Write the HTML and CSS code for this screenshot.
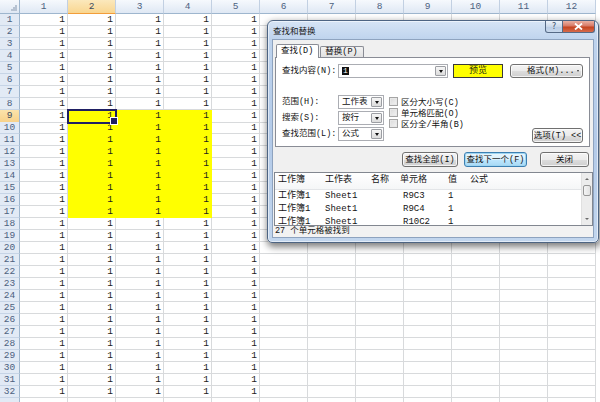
FILE: index.html
```html
<!DOCTYPE html>
<html lang="zh-CN">
<head>
<meta charset="utf-8">
<title>查找和替换</title>
<link rel="stylesheet" href="styles.css">
</head>
<body>
<div class="app">
  <div class="sheet">
    <div class="row head"><span class="corner"></span><span>1</span><span class="act">2</span><span>3</span><span>4</span><span>5</span><span>6</span><span>7</span><span>8</span><span>9</span><span>10</span><span>11</span><span>12</span></div>
    <div class="row"><span class="rh">1</span><span>1</span><span>1</span><span>1</span><span>1</span><span>1</span><span></span><span></span><span></span><span></span><span></span><span></span><span></span></div>
    <div class="row"><span class="rh">2</span><span>1</span><span>1</span><span>1</span><span>1</span><span>1</span><span></span><span></span><span></span><span></span><span></span><span></span><span></span></div>
    <div class="row"><span class="rh">3</span><span>1</span><span>1</span><span>1</span><span>1</span><span>1</span><span></span><span></span><span></span><span></span><span></span><span></span><span></span></div>
    <div class="row"><span class="rh">4</span><span>1</span><span>1</span><span>1</span><span>1</span><span>1</span><span></span><span></span><span></span><span></span><span></span><span></span><span></span></div>
    <div class="row"><span class="rh">5</span><span>1</span><span>1</span><span>1</span><span>1</span><span>1</span><span></span><span></span><span></span><span></span><span></span><span></span><span></span></div>
    <div class="row"><span class="rh">6</span><span>1</span><span>1</span><span>1</span><span>1</span><span>1</span><span></span><span></span><span></span><span></span><span></span><span></span><span></span></div>
    <div class="row"><span class="rh">7</span><span>1</span><span>1</span><span>1</span><span>1</span><span>1</span><span></span><span></span><span></span><span></span><span></span><span></span><span></span></div>
    <div class="row"><span class="rh">8</span><span>1</span><span>1</span><span>1</span><span>1</span><span>1</span><span></span><span></span><span></span><span></span><span></span><span></span><span></span></div>
    <div class="row"><span class="rh act">9</span><span>1</span><span class="hl sel">1</span><span class="hl">1</span><span class="hl">1</span><span>1</span><span></span><span></span><span></span><span></span><span></span><span></span><span></span></div>
    <div class="row"><span class="rh">10</span><span>1</span><span class="hl">1</span><span class="hl">1</span><span class="hl">1</span><span>1</span><span></span><span></span><span></span><span></span><span></span><span></span><span></span></div>
    <div class="row"><span class="rh">11</span><span>1</span><span class="hl">1</span><span class="hl">1</span><span class="hl">1</span><span>1</span><span></span><span></span><span></span><span></span><span></span><span></span><span></span></div>
    <div class="row"><span class="rh">12</span><span>1</span><span class="hl">1</span><span class="hl">1</span><span class="hl">1</span><span>1</span><span></span><span></span><span></span><span></span><span></span><span></span><span></span></div>
    <div class="row"><span class="rh">13</span><span>1</span><span class="hl">1</span><span class="hl">1</span><span class="hl">1</span><span>1</span><span></span><span></span><span></span><span></span><span></span><span></span><span></span></div>
    <div class="row"><span class="rh">14</span><span>1</span><span class="hl">1</span><span class="hl">1</span><span class="hl">1</span><span>1</span><span></span><span></span><span></span><span></span><span></span><span></span><span></span></div>
    <div class="row"><span class="rh">15</span><span>1</span><span class="hl">1</span><span class="hl">1</span><span class="hl">1</span><span>1</span><span></span><span></span><span></span><span></span><span></span><span></span><span></span></div>
    <div class="row"><span class="rh">16</span><span>1</span><span class="hl">1</span><span class="hl">1</span><span class="hl">1</span><span>1</span><span></span><span></span><span></span><span></span><span></span><span></span><span></span></div>
    <div class="row"><span class="rh">17</span><span>1</span><span class="hl">1</span><span class="hl">1</span><span class="hl">1</span><span>1</span><span></span><span></span><span></span><span></span><span></span><span></span><span></span></div>
    <div class="row"><span class="rh">18</span><span>1</span><span>1</span><span>1</span><span>1</span><span>1</span><span></span><span></span><span></span><span></span><span></span><span></span><span></span></div>
    <div class="row"><span class="rh">19</span><span>1</span><span>1</span><span>1</span><span>1</span><span>1</span><span></span><span></span><span></span><span></span><span></span><span></span><span></span></div>
    <div class="row"><span class="rh">20</span><span>1</span><span>1</span><span>1</span><span>1</span><span>1</span><span></span><span></span><span></span><span></span><span></span><span></span><span></span></div>
    <div class="row"><span class="rh">21</span><span>1</span><span>1</span><span>1</span><span>1</span><span>1</span><span></span><span></span><span></span><span></span><span></span><span></span><span></span></div>
    <div class="row"><span class="rh">22</span><span>1</span><span>1</span><span>1</span><span>1</span><span>1</span><span></span><span></span><span></span><span></span><span></span><span></span><span></span></div>
    <div class="row"><span class="rh">23</span><span>1</span><span>1</span><span>1</span><span>1</span><span>1</span><span></span><span></span><span></span><span></span><span></span><span></span><span></span></div>
    <div class="row"><span class="rh">24</span><span>1</span><span>1</span><span>1</span><span>1</span><span>1</span><span></span><span></span><span></span><span></span><span></span><span></span><span></span></div>
    <div class="row"><span class="rh">25</span><span>1</span><span>1</span><span>1</span><span>1</span><span>1</span><span></span><span></span><span></span><span></span><span></span><span></span><span></span></div>
    <div class="row"><span class="rh">26</span><span>1</span><span>1</span><span>1</span><span>1</span><span>1</span><span></span><span></span><span></span><span></span><span></span><span></span><span></span></div>
    <div class="row"><span class="rh">27</span><span>1</span><span>1</span><span>1</span><span>1</span><span>1</span><span></span><span></span><span></span><span></span><span></span><span></span><span></span></div>
    <div class="row"><span class="rh">28</span><span>1</span><span>1</span><span>1</span><span>1</span><span>1</span><span></span><span></span><span></span><span></span><span></span><span></span><span></span></div>
    <div class="row"><span class="rh">29</span><span>1</span><span>1</span><span>1</span><span>1</span><span>1</span><span></span><span></span><span></span><span></span><span></span><span></span><span></span></div>
    <div class="row"><span class="rh">30</span><span>1</span><span>1</span><span>1</span><span>1</span><span>1</span><span></span><span></span><span></span><span></span><span></span><span></span><span></span></div>
    <div class="row"><span class="rh">31</span><span>1</span><span>1</span><span>1</span><span>1</span><span>1</span><span></span><span></span><span></span><span></span><span></span><span></span><span></span></div>
    <div class="row"><span class="rh">32</span><span>1</span><span>1</span><span>1</span><span>1</span><span>1</span><span></span><span></span><span></span><span></span><span></span><span></span><span></span></div>
    <div class="row"><span class="rh"></span><span></span><span></span><span></span><span></span><span></span><span></span><span></span><span></span><span></span><span></span><span></span><span></span></div>
  </div>

  <div class="dialog">
    <div class="titlebar">
      <span class="title">查找和替换</span>
      <div class="caption">
        <span class="cbtn help">?</span>
        <span class="cbtn close"><svg width="9" height="7" viewBox="0 0 9 7"><path d="M1 0.5 L8 6.5 M8 0.5 L1 6.5" stroke="#fff" stroke-width="1.8" fill="none"/></svg></span>
      </div>
    </div>
    <div class="client">
      <div class="tabs">
        <span class="tab on">查找(D)</span>
        <span class="tab">替换(P)</span>
      </div>
      <div class="page">
        <div class="findrow">
          <span class="lbl">查找内容(N):</span>
          <div class="combo wide"><span class="val"><span class="seltext">1</span></span><span class="drop"></span></div>
          <span class="preview">预览</span>
          <span class="btn fmt">格式(M)...<span class="minitri"></span></span>
        </div>
        <div class="opts">
          <div class="optgrid">
            <span class="lbl">范围(H):</span>
            <div class="combo"><span class="val">工作表</span><span class="drop"></span></div>
            <span class="lbl">搜索(S):</span>
            <div class="combo"><span class="val">按行</span><span class="drop"></span></div>
            <span class="lbl">查找范围(L):</span>
            <div class="combo"><span class="val">公式</span><span class="drop"></span></div>
          </div>
          <div class="checks">
            <div class="chk"><span class="box"></span>区分大小写(C)</div>
            <div class="chk"><span class="box"></span>单元格匹配(O)</div>
            <div class="chk"><span class="box"></span>区分全/半角(B)</div>
          </div>
          <span class="btn optbtn">选项(T) &lt;&lt;</span>
        </div>
      </div>
      <div class="actions">
        <span class="btn findall">查找全部(I)</span>
        <span class="btn def findnext">查找下一个(F)</span>
        <span class="btn closebtn">关闭</span>
      </div>
      <div class="list">
        <div class="lbody">
          <div class="lrow lhead"><span>工作簿</span><span>工作表</span><span>名称</span><span>单元格</span><span>值</span><span>公式</span></div>
          <div class="lrow"><span>工作簿1</span><span>Sheet1</span><span></span><span class="cell">R9C3</span><span>1</span><span></span></div>
          <div class="lrow"><span>工作簿1</span><span>Sheet1</span><span></span><span class="cell">R9C4</span><span>1</span><span></span></div>
          <div class="lrow"><span>工作簿1</span><span>Sheet1</span><span></span><span class="cell">R10C2</span><span>1</span><span></span></div>
        </div>
        <div class="vscroll">
          <span class="sarrow up"></span>
          <span class="thumb"></span>
          <span class="track"></span>
          <span class="sarrow down"></span>
        </div>
      </div>
      <div class="status">27 个单元格被找到</div>
    </div>
  </div>
</div>
</body>
</html>
```

FILE: styles.css
```css
* { box-sizing: border-box; }
html, body { margin: 0; padding: 0; }
body {
  width: 600px;
  height: 402px;
  overflow: hidden;
  background: #fff;
  font-family: "Liberation Mono", "Noto Sans CJK SC", monospace;
}
.app { position: relative; width: 600px; height: 402px; overflow: hidden; }

/* ---------- spreadsheet ---------- */
.sheet { display: flex; flex-direction: column; }
.row {
  display: grid;
  grid-template-columns: 20px repeat(12, 48px);
  height: 12px;
  flex: none;
}
.row > span {
  border-right: 1px solid #d8dadc;
  border-bottom: 1px solid #d8dadc;
  font-size: 9.5px;
  line-height: 12px;
  text-align: right;
  padding-right: 2px;
  color: #1c1c1c;
  overflow: hidden;
  white-space: nowrap;
}
.row > .rh {
  background: #e2eaf5;
  border-right: 1px solid #9eb6ce;
  border-bottom: 1px solid #c6d4e6;
  text-align: center;
  padding: 0;
  color: #4d6180;
}
.row > .rh.act {
  background: linear-gradient(#fbe3ab, #f8d28a);
  border-bottom-color: #e9b65f;
  color: #3c4a60;
}
.head { height: 14px; }
.head > span {
  background: linear-gradient(#f6f9fd, #dfe8f4);
  border-right: 1px solid #c2d0e2;
  border-bottom: 1px solid #9eb6ce;
  text-align: center;
  padding: 0;
  line-height: 14px;
  color: #4d6180;
}
.head > .act {
  background: linear-gradient(#fbe8bc, #f9d690);
  border-bottom-color: #f29d3a;
  color: #3c4a60;
}
.head > .corner {
  background:
    linear-gradient(135deg, transparent 50%, #b6c2d2 50%) no-repeat right 2px bottom 2px / 7px 7px,
    linear-gradient(#f6f9fd, #dfe8f4);
  border-right-color: #9eb6ce;
}
.row > .hl {
  background: #ffff00;
  border-color: #ffff00;
}
.row > .sel {
  position: relative;
  z-index: 1;
  overflow: visible;
  outline: 2px solid #1f1f63;
  outline-offset: -1px;
}
.row > .sel::after {
  content: "";
  position: absolute;
  right: -3px;
  bottom: -3px;
  width: 6px;
  height: 6px;
  background: #1f1f63;
  border: 1px solid #fff;
}

/* ---------- dialog window ---------- */
.dialog {
  position: absolute;
  left: 267px;
  top: 20px;
  width: 332px;
  height: 223px;
  border: 1px solid #4d6482;
  border-radius: 6px 6px 5px 5px;
  background: linear-gradient(180deg, #d6e4f5 0, #bed3ed 19px, #b3cae8 55%, #c2d6ee 100%);
  box-shadow: 1px 3px 7px 1px rgba(0, 0, 0, 0.5), inset 0 0 0 1px rgba(255, 255, 255, 0.55);
  display: flex;
  flex-direction: column;
  padding: 0 5px 5px;
  font-size: 8.5px;
  color: #111;
}
.titlebar { height: 19px; display: flex; flex: none; }
.title { padding: 6px 0 0 0; font-size: 8.5px; line-height: 10px; color: #1a1a1a; }
.caption { margin-left: auto; margin-right: -2px; display: flex; height: 12px; }
.cbtn {
  height: 12px;
  display: flex;
  align-items: center;
  justify-content: center;
  border: 1px solid #566a86;
  border-top: 0;
}
.help {
  width: 18px;
  border-radius: 0 0 0 3px;
  background: linear-gradient(#edf2f9, #cbd9eb 50%, #b9cce5 51%, #c8d8ec);
  color: #3b4d69;
  font-size: 8px;
  line-height: 10px;
  font-family: "DejaVu Sans", sans-serif;
}
.close {
  width: 32px;
  border-left: 0;
  border-radius: 0 0 3px 0;
  background: linear-gradient(#eab0a2, #d77966 45%, #c4431f 55%, #d66b4c);
}

.client {
  flex: 1;
  background: #f0f0f0;
  box-shadow: 0 0 0 1px #8ea3bf;
  display: flex;
  flex-direction: column;
}
.tabs {
  display: flex;
  align-items: flex-end;
  height: 15px;
  margin-top: 2px;
  padding-left: 3px;
  flex: none;
}
.tab {
  height: 11px;
  line-height: 10px;
  padding: 0 5px 0 4px;
  border: 1px solid #898c95;
  border-bottom: 0;
  border-radius: 2px 2px 0 0;
  background: linear-gradient(#f3f3f3, #e1e1e1);
  white-space: nowrap;
}
.tab.on {
  height: 14px;
  line-height: 13px;
  margin-bottom: -1px;
  background: #fff;
  position: relative;
  z-index: 1;
}
.tab + .tab { margin-left: 1px; }

.page {
  height: 90px;
  margin: 0 3px 0 2px;
  border: 1px solid #898c95;
  background: #fff;
  padding: 6px 0 0 6px;
  display: flex;
  flex-direction: column;
  flex: none;
}
.findrow { display: flex; align-items: center; height: 14px; }
.lbl { white-space: nowrap; line-height: 14px; }
.findrow .lbl { width: 56px; }
.combo {
  display: flex;
  align-items: center;
  height: 14px;
  width: 46px;
  border: 1px solid #abadb3;
  background: #fff;
}
.combo.wide { width: 110px; }
.combo .val { flex: 1; padding-left: 3px; line-height: 12px; white-space: nowrap; }
.seltext {
  display: inline-block;
  background: #111;
  color: #fff;
  line-height: 8px;
  font-size: 8px;
  padding: 0 1px;
}
.drop {
  width: 11px;
  height: 10px;
  margin-right: 1px;
  border: 1px solid #9c9ea3;
  border-radius: 1px;
  background: linear-gradient(#f6f6f6, #dcdcdc);
  display: flex;
  align-items: center;
  justify-content: center;
}
.drop::before {
  content: "";
  border-left: 2.5px solid transparent;
  border-right: 2.5px solid transparent;
  border-top: 3px solid #111;
}
.preview {
  width: 50px;
  height: 14px;
  margin-left: 5px;
  background: #ffff00;
  border: 1px solid #3a3a3a;
  text-align: center;
  line-height: 12px;
  font-size: 9px;
  color: #2a2a10;
}
.btn {
  display: flex;
  align-items: center;
  justify-content: center;
  height: 15px;
  border: 1px solid #707070;
  border-radius: 3px;
  background: linear-gradient(#f3f3f3 0, #ebebeb 50%, #dddddd 51%, #cfcfcf 100%);
  box-shadow: inset 0 0 0 1px rgba(255, 255, 255, 0.75);
  white-space: nowrap;
  font-size: 8.5px;
  line-height: 12px;
  color: #111;
}
.fmt {
  width: 73px;
  height: 14px;
  margin-left: 7px;
  justify-content: flex-start;
  padding-left: 16px;
}
.minitri {
  margin-left: auto;
  margin-right: 3px;
  border-left: 1.5px solid transparent;
  border-right: 1.5px solid transparent;
  border-top: 2px solid #333;
}
.opts { display: flex; margin-top: 17px; height: 48px; }
.optgrid {
  display: grid;
  grid-template-columns: 56px 46px;
  grid-auto-rows: 14px;
  row-gap: 2px;
  align-items: center;
}
.checks {
  margin-left: 5px;
  padding-top: 1px;
  display: flex;
  flex-direction: column;
}
.chk {
  display: flex;
  align-items: center;
  height: 11px;
  gap: 3px;
  white-space: nowrap;
}
.box {
  width: 9px;
  height: 9px;
  border: 1px solid #a5a5a5;
  background: linear-gradient(135deg, #d9d9d9, #f4f4f4);
  box-shadow: inset 0 0 0 1px #e8e8e8;
}
.optbtn {
  margin-left: auto;
  margin-right: 6px;
  align-self: flex-end;
  width: 51px;
}

.actions {
  display: flex;
  justify-content: flex-end;
  margin-top: 5px;
  height: 15px;
  padding-right: 4px;
  flex: none;
}
.findall { width: 56px; }
.findnext { width: 63px; margin-left: 6px; }
.closebtn { width: 49px; margin-left: 13px; }
.btn.def {
  border-color: #3c7fb1;
  box-shadow: inset 0 0 0 1px #9fd6f2;
  background: linear-gradient(#eaf6fd 0, #d9f0fc 50%, #bee6fd 51%, #a7d9f5 100%);
}

.list {
  margin: 5px 0 0 1px;
  height: 54px;
  border: 1px solid #828790;
  background: #fff;
  display: flex;
  flex: none;
}
.lbody { flex: 1; overflow: hidden; }
.lrow {
  display: grid;
  grid-template-columns: 47px 46px 29px 48px 22px 1fr;
  padding-left: 3px;
  height: 13px;
  line-height: 13px;
  font-size: 9px;
  white-space: nowrap;
  color: #141414;
}
.lhead {
  height: 17px;
  line-height: 15px;
  background: linear-gradient(#ffffff, #f5f6f7);
  border-bottom: 1px solid #e3e5e8;
}
.lrow .cell { padding-left: 3px; }
.vscroll {
  width: 11px;
  display: flex;
  flex-direction: column;
  background: #ececec;
  border-left: 1px solid #e0e0e0;
}
.sarrow {
  height: 12px;
  display: flex;
  align-items: center;
  justify-content: center;
}
.sarrow::before {
  content: "";
  border-left: 2px solid transparent;
  border-right: 2px solid transparent;
}
.sarrow.up::before { border-bottom: 2.5px solid #6b6b6b; }
.sarrow.down::before { border-top: 2.5px solid #6b6b6b; }
.thumb {
  height: 11px;
  margin: 0 1px;
  border: 1px solid #979797;
  border-radius: 2px;
  background: linear-gradient(90deg, #f4f4f4, #e2e2e2);
}
.track { flex: 1; }
.status {
  height: 11px;
  line-height: 11px;
  padding-left: 2px;
  font-size: 8.5px;
  white-space: nowrap;
  background: #f2f2f2;
  color: #111;
  flex: none;
}
```
